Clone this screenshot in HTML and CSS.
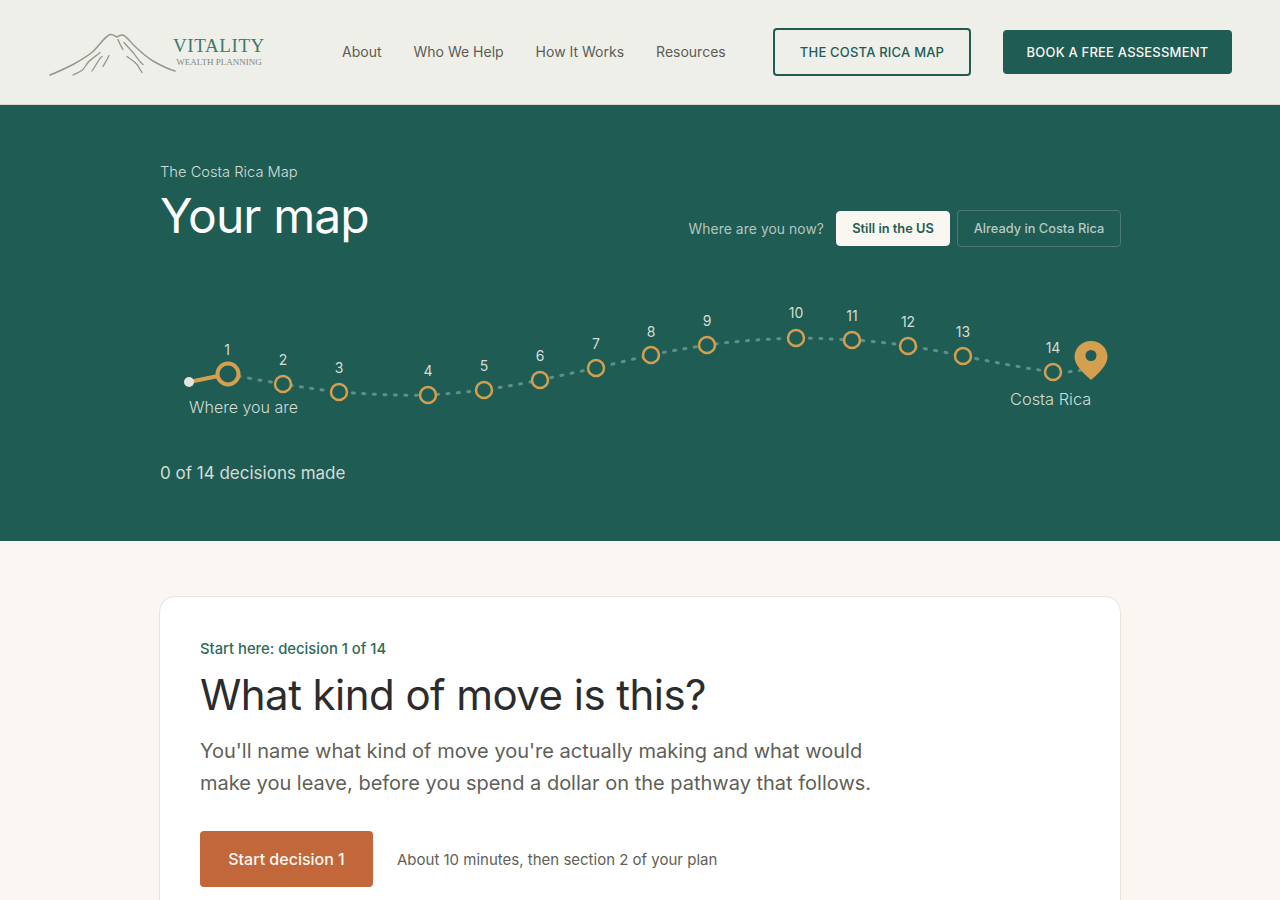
FILE: index.html
```html
<!DOCTYPE html>
<html>
<head>
    <meta charset="utf-8">
    <title>Your map</title>
    <link rel="stylesheet" href="styles.css">
</head>
<body>
    <header class="site-header">
        <a class="logo" href="#">
            <svg class="logo-mark" width="130" height="46" viewBox="0 0 130 46">
                <path class="ridge" d="M2 43 C10 40 18 36 25 32.500 C33 28 40 24 45 19.500 C52 13 56 5 62 2.500 C64 2 65 2.500 69 5 C71 3.500 73 2.500 75 3 C78 4 82 9 85 12.500 C92 19 98 25 105 29 C112 33 119 37 127 39"/>
                <path class="fold" d="M25 43 C29 41 32 40 35 37.500 C37 35 38 33 40 30.500 C43 27 48 24 52 20.500"/>
                <path class="fold" d="M44 39 C46 36 48 33 50 29.500 C51 27 52 26 54 24.500"/>
                <path class="fold" d="M55 34.500 C57 31 59 28 61 23.500"/>
                <path class="fold" d="M70 7.500 C71 11 73 14 75 17.500"/>
                <path class="fold" d="M76 10.500 C79 14 82 17 85 20.500 C88 24 91 29 95 32.500"/>
                <path class="fold" d="M79 24.500 C82 27 86 29 89 32.500 C91 35 92 38 94 40.500"/>
            </svg>
            <span class="logo-text">
                <span class="logo-name">VITALITY</span>
                <span class="logo-sub">WEALTH PLANNING</span>
            </span>
        </a>
        <nav class="main-nav">
            <a href="#">About</a>
            <a href="#">Who We Help</a>
            <a href="#">How It Works</a>
            <a href="#">Resources</a>
        </nav>
        <div class="header-actions">
            <a class="btn-outline" href="#">The Costa Rica Map</a>
            <a class="btn-solid" href="#">Book a Free Assessment</a>
        </div>
    </header>

    <section class="hero">
        <div class="hero-top">
            <div>
                <p class="eyebrow">The Costa Rica Map</p>
                <h1>Your map</h1>
            </div>
            <div class="status">
                <span class="status-label">Where are you now?</span>
                <button class="chip chip-on">Still in the US</button>
                <button class="chip">Already in Costa Rica</button>
            </div>
        </div>

        <svg class="route" width="960" height="130" viewBox="160 295 960 130">
            <path class="route-dots" d="M228 374 C246 378 265 381 283 384 C302 387 320 390 339 392 C368 394 398 396 428 395 C447 394 465 392 484 390 C503 387 521 384 540 380 C559 376 577 372 596 368 C614 364 633 359 651 355 C670 351 688 348 707 345 C737 341 766 339 796 338 C815 338 833 339 852 340 C871 341 889 343 908 346 C927 349 945 352 963 356 C993 362 1023 368 1053 372 C1066 373 1078 371 1091 368"/>
            <path class="route-done" d="M189 382 L228 374"/>
            <circle class="route-start" cx="189" cy="382" r="5"/>
            <g class="stops">
                <circle class="stop-now" cx="228" cy="374" r="10.500"/>
                <circle cx="283" cy="384" r="8"/>
                <circle cx="339" cy="392" r="8"/>
                <circle cx="428" cy="395" r="8"/>
                <circle cx="484" cy="390" r="8"/>
                <circle cx="540" cy="380" r="8"/>
                <circle cx="596" cy="368" r="8"/>
                <circle cx="651" cy="355" r="8"/>
                <circle cx="707" cy="345" r="8"/>
                <circle cx="796" cy="338" r="8"/>
                <circle cx="852" cy="340" r="8"/>
                <circle cx="908" cy="346" r="8"/>
                <circle cx="963" cy="356" r="8"/>
                <circle cx="1053" cy="372" r="8"/>
            </g>
            <g class="stop-nums">
                <text x="227" y="355">1</text>
                <text x="283" y="365">2</text>
                <text x="339" y="373">3</text>
                <text x="428" y="376">4</text>
                <text x="484" y="371">5</text>
                <text x="540" y="361">6</text>
                <text x="596" y="349">7</text>
                <text x="651" y="337">8</text>
                <text x="707" y="326">9</text>
                <text x="796" y="318">10</text>
                <text x="852" y="321">11</text>
                <text x="908" y="327">12</text>
                <text x="963" y="337">13</text>
                <text x="1053" y="353">14</text>
            </g>
            <path class="pin" d="M1091 341 C1100.500 341 1107.500 348 1107.500 357 C1107.500 365 1098 374 1091 380 C1084 374 1074.500 365 1074.500 357 C1074.500 348 1081.500 341 1091 341 Z"/>
            <circle class="pin-hole" cx="1091" cy="355.500" r="5.500"/>
            <text class="route-label" x="189" y="413">Where you are</text>
            <text class="route-label route-label-end" x="1010" y="405">Costa Rica</text>
        </svg>

        <p class="progress">0 of 14 decisions made</p>
    </section>

    <main class="content">
        <article class="card">
            <p class="card-eyebrow">Start here: decision 1 of 14</p>
            <h2>What kind of move is this?</h2>
            <p class="card-text">You'll name what kind of move you're actually making and what would make you leave, before you spend a dollar on the pathway that follows.</p>
            <div class="card-action">
                <a class="btn-start" href="#">Start decision 1</a>
                <span class="card-note">About 10 minutes, then section 2 of your plan</span>
            </div>
        </article>
    </main>
</body>
</html>
```

FILE: styles.css
```css
* {
    box-sizing: border-box;
}

html, body {
    height: 900px;
    overflow: hidden;
}

body {
    margin: 0;
    background-color: #faf7f2;
    font-family: "Inter", "Liberation Sans", sans-serif;
    color: #2c2c2c;
}

a {
    text-decoration: none;
}

.site-header {
    display: flex;
    align-items: center;
    height: 105px;
    padding: 0 48px;
    background-color: #efefea;
    border-bottom: 1px solid #d9d9d2;
}

.logo {
    display: flex;
    align-items: flex-start;
    width: 294px;
    height: 46px;
    margin-top: 5px;
}

.logo-mark {
    display: block;
    flex: none;
    margin-right: -5px;
}

.ridge, .fold {
    fill: none;
    stroke: #96968f;
    stroke-linecap: round;
}

.ridge {
    stroke-width: 1.5;
}

.fold {
    stroke-width: 1.3;
}

.logo-text {
    display: flex;
    flex-direction: column;
    align-items: center;
    margin-top: 4px;
    font-family: "Liberation Serif", serif;
}

.logo-name {
    font-size: 19px;
    line-height: 20px;
    letter-spacing: 0.6px;
    color: #3d7a6c;
}

.logo-sub {
    font-size: 9px;
    line-height: 12px;
    color: #85857f;
}

.main-nav {
    display: flex;
    gap: 32px;
}

.main-nav a {
    font-size: 14px;
    line-height: 20px;
    color: #5c5c55;
}

.header-actions {
    display: flex;
    align-items: center;
    gap: 32px;
    margin-left: auto;
}

.btn-outline, .btn-solid {
    font-size: 13px;
    font-weight: 500;
    letter-spacing: 0.2px;
    text-transform: uppercase;
    border-radius: 4px;
}

.btn-outline {
    display: flex;
    align-items: center;
    justify-content: center;
    width: 198px;
    height: 48px;
    color: #1e5c54;
    border: 2px solid #1e5c54;
}

.btn-solid {
    display: flex;
    align-items: center;
    justify-content: center;
    width: 229px;
    height: 44px;
    color: #faf7f2;
    background-color: #1e5c54;
}

.hero {
    height: 436px;
    padding: 56px 160px 0;
    background-color: #1e5c54;
}

.hero-top {
    display: flex;
    justify-content: space-between;
    align-items: flex-end;
}

.eyebrow {
    margin: 0;
    font-size: 14.7px;
    font-weight: 300;
    line-height: 22px;
    color: #d5dcd6;
}

h1 {
    margin: 3px 0 0;
    font-size: 48px;
    font-weight: 400;
    line-height: 60px;
    letter-spacing: -0.9px;
    color: #ffffff;
}

.status {
    display: flex;
    align-items: center;
    margin-right: -1px;
    margin-bottom: -1px;
}

.status-label {
    margin-right: 12px;
    font-size: 13.8px;
    letter-spacing: 0.1px;
    color: #b4c6bf;
}

.chip {
    width: 164px;
    height: 37px;
    padding: 0;
    font-family: "Inter", "Liberation Sans", sans-serif;
    font-size: 12.8px;
    font-weight: 500;
    color: #b9cac3;
    background: transparent;
    border: 1px solid #4b7c73;
    border-radius: 4px;
}

.chip-on {
    width: 114px;
    height: 35px;
    margin-right: 7px;
    color: #1e5c54;
    font-weight: 600;
    background-color: #faf7f2;
    border-color: #faf7f2;
}

.route {
    display: block;
    margin-top: 49px;
}

.route-dots {
    fill: none;
    stroke: #5f9087;
    stroke-width: 3;
    stroke-linecap: round;
    stroke-dasharray: 2 8.5;
}

.route-done {
    fill: none;
    stroke: #d4a050;
    stroke-width: 4;
    stroke-linecap: round;
}

.route-start {
    fill: #e4e4e0;
}

.stops circle {
    fill: #1e5c54;
    stroke: #d4a050;
    stroke-width: 2.5;
}

.stops .stop-now {
    stroke-width: 4;
}

.stop-nums text {
    font-size: 14px;
    text-anchor: middle;
    fill: #d5dcd6;
}

.pin {
    fill: #d4a050;
}

.pin-hole {
    fill: #1e5c54;
}

.route-label {
    font-size: 16px;
    font-weight: 300;
    fill: #d5dcd6;
}

.route-label-end {
    font-size: 16.4px;
}

.progress {
    margin: 35px 0 0;
    font-size: 17px;
    line-height: 26px;
    color: #d5dcd6;
}

.content {
    padding: 55px 159px 0;
}

.card {
    padding: 41px 40px 40px;
    background-color: #ffffff;
    border: 1px solid #e8e4dc;
    border-radius: 16px;
}

.card-eyebrow {
    margin: 0;
    font-size: 14.8px;
    font-weight: 500;
    line-height: 22px;
    color: #2f6a58;
}

h2 {
    margin: 9px 0 0;
    font-size: 42px;
    font-weight: 400;
    line-height: 52px;
    letter-spacing: -0.55px;
    color: #2c2c2c;
}

.card-text {
    width: 700px;
    margin: 14px 0 0;
    font-size: 20px;
    line-height: 32px;
    color: #5f5f57;
}

.card-action {
    display: flex;
    align-items: center;
    gap: 24px;
    margin-top: 32px;
}

.btn-start {
    display: flex;
    align-items: center;
    justify-content: center;
    width: 173px;
    height: 56px;
    font-size: 16px;
    font-weight: 500;
    color: #faf7f2;
    background-color: #c1673a;
    border-radius: 4px;
}

.card-note {
    font-size: 15px;
    color: #5f5f57;
}
```
